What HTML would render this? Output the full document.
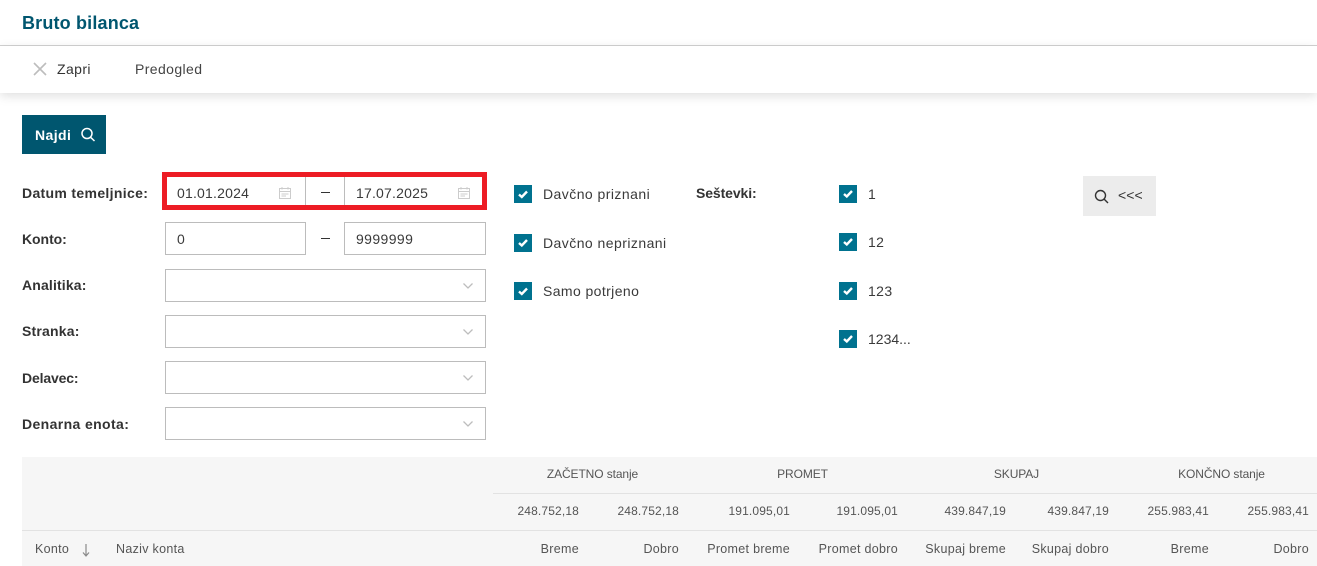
<!DOCTYPE html>
<html lang="sl"><head><meta charset="utf-8"><title>Bruto bilanca</title>
<style>
html,body{margin:0;padding:0;background:#fff}
body{position:relative;width:1317px;height:566px;overflow:hidden;font-family:"Liberation Sans",sans-serif;font-size:14px;color:#333}
.a{position:absolute;white-space:nowrap;line-height:18px}
.b{position:absolute;box-sizing:border-box;border:1px solid #bcbcbc;background:#fff}
.lab{font-weight:bold;color:#333;left:22px;font-size:14px}
.t{font-size:14px;letter-spacing:.4px;color:#3a3a3a}
.cb{position:absolute;width:18px;height:18px;background:#00728f}
.cb svg{position:absolute;left:0;top:0}
.th{font-size:12.5px;color:#555;letter-spacing:.3px;text-align:right}
.h{font-size:12px;letter-spacing:-.1px;text-align:center;font-weight:normal}
.n{font-size:12px;letter-spacing:.15px}
svg{position:absolute;overflow:visible}
</style></head><body>

<div class="a" style="left:22px;top:12px;font-size:18px;font-weight:bold;color:#00566f;line-height:22px;letter-spacing:.17px">Bruto bilanca</div>
<div style="position:absolute;left:0;top:45px;width:1317px;height:1px;background:#d2d2d2"></div>
<div style="position:absolute;left:0;top:46px;width:1317px;height:47px;background:#fff;box-shadow:0 3px 10px rgba(0,0,0,.13)"></div>

<svg style="left:33px;top:62px" width="14" height="14" fill="none" stroke="#bdbdbd" stroke-width="1.6"><path d="M1 1L13 13M13 1L1 13"/></svg>
<div class="a t" style="left:57px;top:60px;color:#333">Zapri</div>
<div class="a t" style="left:135px;top:60px;color:#444">Predogled</div>

<div style="position:absolute;left:22px;top:115px;width:84px;height:39px;background:#00566f"></div>
<div class="a" style="left:35px;top:126px;color:#fff;font-weight:bold;font-size:14px;letter-spacing:.4px">Najdi</div>
<svg style="left:80px;top:127px" width="16" height="16" fill="none" stroke="#fff" stroke-width="1.5"><circle cx="7" cy="6.5" r="5"/><path d="M10.5 10.2L14.5 14"/></svg>

<div class="a lab" style="top:184px;letter-spacing:.33px">Datum temeljnice:</div>
<div class="a lab" style="top:230px;letter-spacing:-.05px">Konto:</div>
<div class="a lab" style="top:276px;letter-spacing:.15px">Analitika:</div>
<div class="a lab" style="top:322px;letter-spacing:.2px">Stranka:</div>
<div class="a lab" style="top:369px;letter-spacing:-.15px">Delavec:</div>
<div class="a lab" style="top:415px;letter-spacing:.38px">Denarna enota:</div>

<!-- date row -->
<div style="position:absolute;left:305px;top:177px;width:1px;height:28px;background:#bcbcbc"></div>
<div style="position:absolute;left:344px;top:177px;width:1px;height:28px;background:#bcbcbc"></div>
<div style="position:absolute;left:162px;top:172px;width:325px;height:38px;box-sizing:border-box;border:5px solid #ed1c24"></div>
<div class="a t" style="left:177px;top:184px;letter-spacing:.2px">01.01.2024</div>
<div class="a t" style="left:356px;top:184px;letter-spacing:.2px">17.07.2025</div>
<div style="position:absolute;left:321px;top:192px;width:9px;height:1px;background:#333"></div>
<svg style="left:279px;top:187px" width="12" height="12" fill="none" stroke="#ccc" stroke-width="1"><rect x=".5" y="1.5" width="11" height="10"/><path d="M.5 4.5H11.5M3 0V2.5M9 0V2.5M2.5 7H9.5M2.5 9H7"/></svg>
<svg style="left:458px;top:187px" width="12" height="12" fill="none" stroke="#ccc" stroke-width="1"><rect x=".5" y="1.5" width="11" height="10"/><path d="M.5 4.5H11.5M3 0V2.5M9 0V2.5M2.5 7H9.5M2.5 9H7"/></svg>

<!-- konto -->
<div class="b" style="left:165px;top:222px;width:141px;height:33px"></div>
<div class="b" style="left:344px;top:222px;width:142px;height:33px"></div>
<div class="a t" style="left:177px;top:230px">0</div>
<div class="a t" style="left:356px;top:230px">9999999</div>
<div style="position:absolute;left:321px;top:238px;width:9px;height:1px;background:#333"></div>

<!-- selects -->
<div class="b" style="left:165px;top:269px;width:321px;height:33px"></div>
<div class="b" style="left:165px;top:315px;width:321px;height:33px"></div>
<div class="b" style="left:165px;top:361px;width:321px;height:33px"></div>
<div class="b" style="left:165px;top:407px;width:321px;height:33px"></div>
<svg style="left:463px;top:283px" width="10" height="6" fill="none" stroke="#bdbdbd" stroke-width="1.3"><path d="M.5 .5L5 5L9.500 .5"/></svg>
<svg style="left:463px;top:329px" width="10" height="6" fill="none" stroke="#bdbdbd" stroke-width="1.3"><path d="M.5 .5L5 5L9.500 .5"/></svg>
<svg style="left:463px;top:375px" width="10" height="6" fill="none" stroke="#bdbdbd" stroke-width="1.3"><path d="M.5 .5L5 5L9.500 .5"/></svg>
<svg style="left:463px;top:421px" width="10" height="6" fill="none" stroke="#bdbdbd" stroke-width="1.3"><path d="M.5 .5L5 5L9.500 .5"/></svg>

<!-- checks -->
<div class="cb" style="left:514px;top:185px"><svg width="18" height="18" fill="none" stroke="#fff" stroke-width="2.4"><path d="M5 9.500L7.800 12L13 6.500"/></svg></div>
<div class="cb" style="left:514px;top:234px"><svg width="18" height="18" fill="none" stroke="#fff" stroke-width="2.4"><path d="M5 9L7.800 11.500L13 6"/></svg></div>
<div class="cb" style="left:514px;top:282px"><svg width="18" height="18" fill="none" stroke="#fff" stroke-width="2.4"><path d="M5 9.500L7.800 12L13 6.500"/></svg></div>
<div class="a t" style="left:543px;top:185px;letter-spacing:.45px">Davčno priznani</div>
<div class="a t" style="left:543px;top:234px;letter-spacing:.45px">Davčno nepriznani</div>
<div class="a t" style="left:543px;top:282px">Samo potrjeno</div>
<div class="a lab" style="left:696px;top:184px;letter-spacing:-.1px">Seštevki:</div>

<div class="cb" style="left:839px;top:185px"><svg width="18" height="18" fill="none" stroke="#fff" stroke-width="2.4"><path d="M5 9L7.800 11.500L13 6"/></svg></div>
<div class="cb" style="left:839px;top:233px"><svg width="18" height="18" fill="none" stroke="#fff" stroke-width="2.4"><path d="M5 9L7.800 11.500L13 6"/></svg></div>
<div class="cb" style="left:839px;top:282px"><svg width="18" height="18" fill="none" stroke="#fff" stroke-width="2.4"><path d="M5 9L7.800 11.500L13 6"/></svg></div>
<div class="cb" style="left:839px;top:330px"><svg width="18" height="18" fill="none" stroke="#fff" stroke-width="2.4"><path d="M5 9L7.800 11.500L13 6"/></svg></div>
<div class="a t" style="left:868px;top:185px">1</div>
<div class="a t" style="left:868px;top:233px">12</div>
<div class="a t" style="left:868px;top:282px">123</div>
<div class="a t" style="left:868px;top:330px;letter-spacing:0">1234...</div>

<div style="position:absolute;left:1083px;top:176px;width:73px;height:40px;background:#ececec"></div>
<svg style="left:1094px;top:189px" width="15" height="15" fill="none" stroke="#333" stroke-width="1.4"><circle cx="6.500" cy="6.500" r="5"/><path d="M10 10L14 14"/></svg>
<div class="a t" style="left:1118px;top:186px;color:#333;letter-spacing:.1px">&lt;&lt;&lt;</div>

<!-- table -->
<div style="position:absolute;left:22px;top:457px;width:1295px;height:109px;background:#f6f6f6"></div>
<div style="position:absolute;left:493px;top:493px;width:824px;height:1px;background:#e2e2e2"></div>
<div style="position:absolute;left:22px;top:530px;width:1295px;height:1px;background:#e2e2e2"></div>

<div class="a th h" style="left:493px;width:199px;top:465px">ZAČETNO stanje</div>
<div class="a th h" style="left:703px;width:199px;top:465px">PROMET</div>
<div class="a th h" style="left:917px;width:199px;top:465px">SKUPAJ</div>
<div class="a th h" style="left:1122px;width:199px;top:465px">KONČNO stanje</div>

<div class="a th n" style="right:738px;top:502px">248.752,18</div>
<div class="a th n" style="right:638px;top:502px">248.752,18</div>
<div class="a th n" style="right:527px;top:502px">191.095,01</div>
<div class="a th n" style="right:419px;top:502px">191.095,01</div>
<div class="a th n" style="right:311px;top:502px">439.847,19</div>
<div class="a th n" style="right:208px;top:502px">439.847,19</div>
<div class="a th n" style="right:108px;top:502px">255.983,41</div>
<div class="a th n" style="right:8px;top:502px">255.983,41</div>

<div class="a th" style="left:35px;top:540px">Konto</div>
<svg style="left:82px;top:544px" width="8" height="13" fill="none" stroke="#8a8a8a" stroke-width="1.2"><path d="M4 0V11M1 8.500L4 12L7 8.500"/></svg>
<div class="a th" style="left:116px;top:540px">Naziv konta</div>
<div class="a th" style="right:738px;top:540px">Breme</div>
<div class="a th" style="right:638px;top:540px">Dobro</div>
<div class="a th" style="right:527px;top:540px">Promet breme</div>
<div class="a th" style="right:419px;top:540px">Promet dobro</div>
<div class="a th" style="right:311px;top:540px">Skupaj breme</div>
<div class="a th" style="right:208px;top:540px">Skupaj dobro</div>
<div class="a th" style="right:108px;top:540px">Breme</div>
<div class="a th" style="right:8px;top:540px">Dobro</div>
</body></html>
